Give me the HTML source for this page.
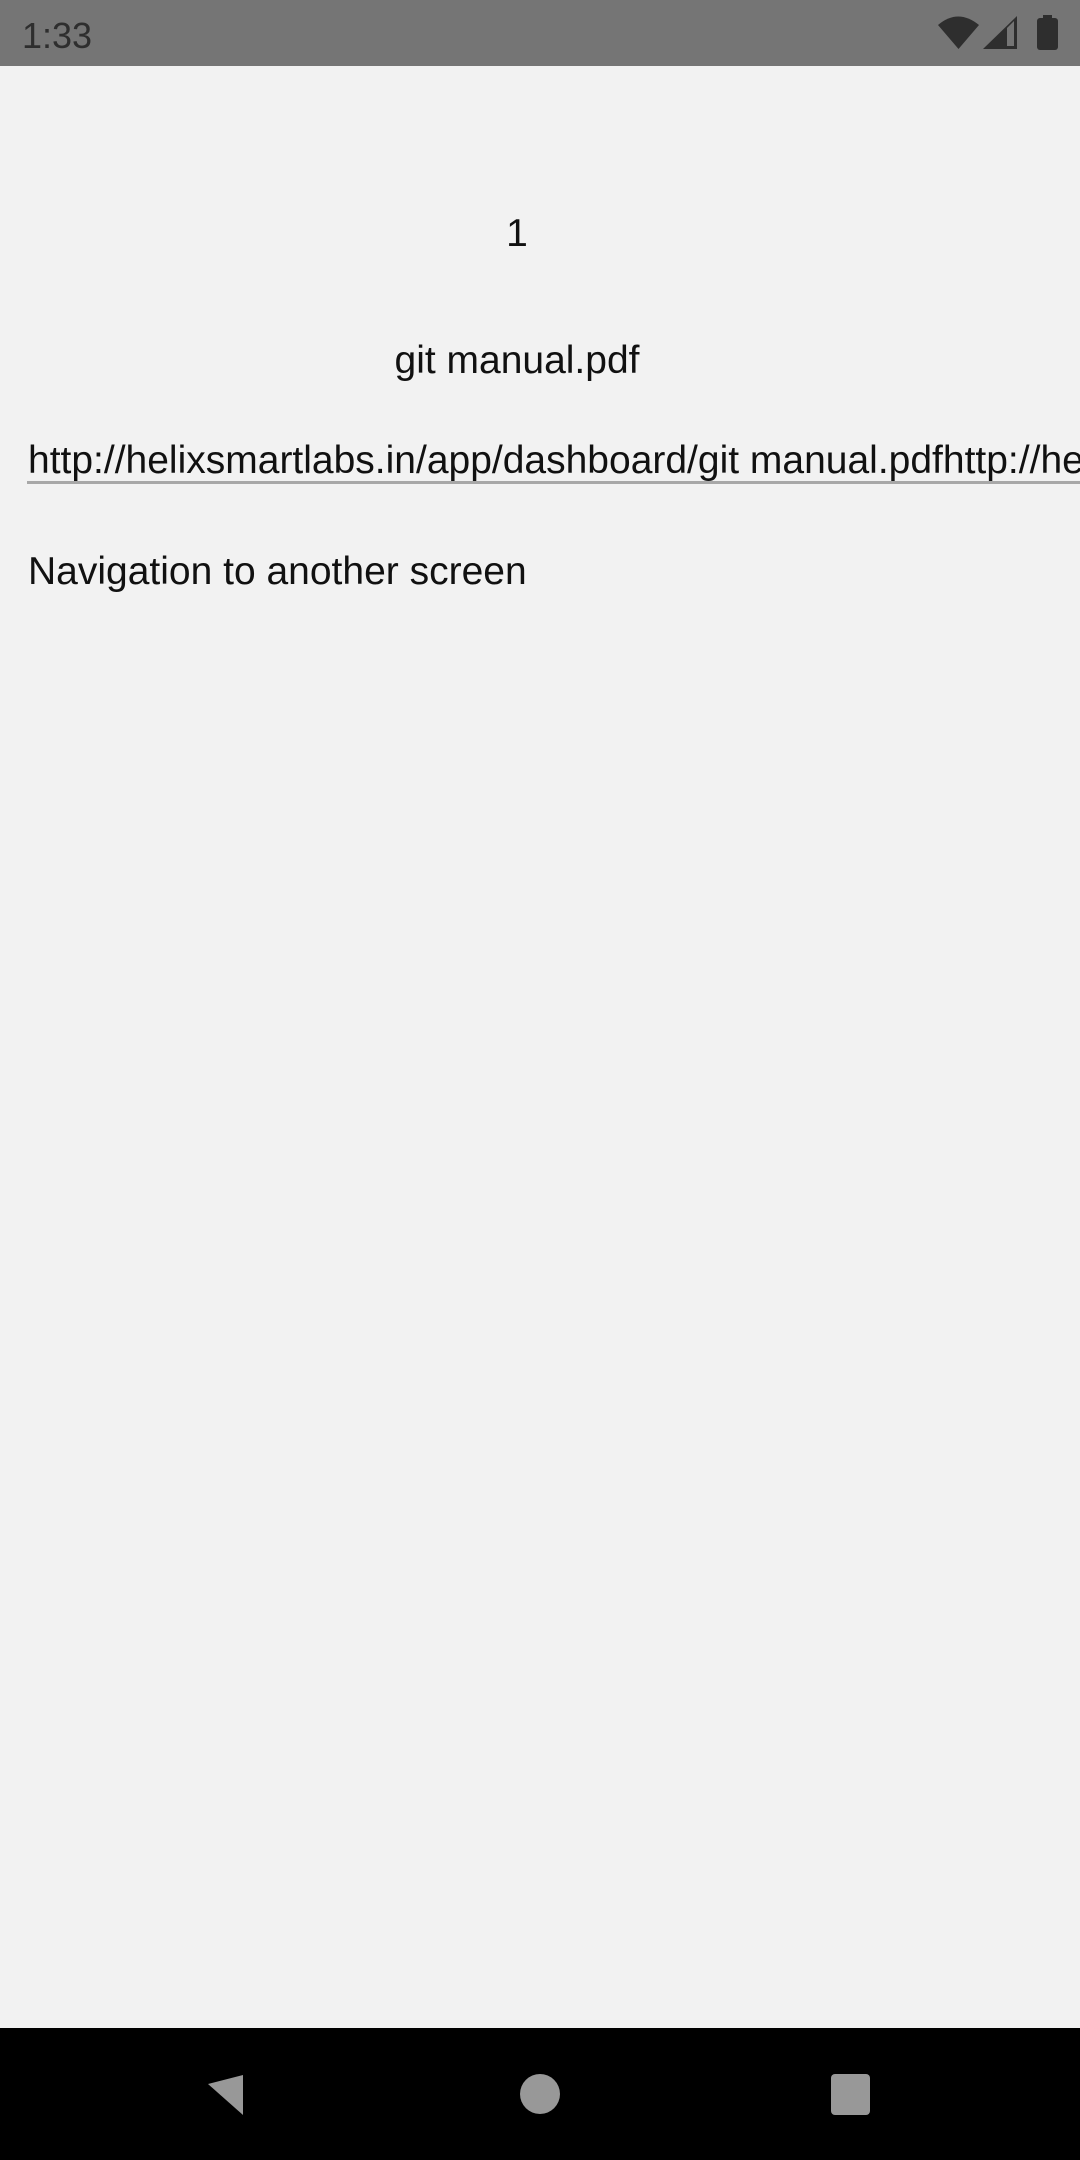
<!DOCTYPE html>
<html><head><meta charset="utf-8"><style>
html,body{margin:0;padding:0}
body{width:1080px;height:2160px;background:#f2f2f2;position:relative;overflow:hidden;font-family:"Liberation Sans",sans-serif;color:#111}
.t{position:absolute;font-size:39px;line-height:39.5px;white-space:nowrap}
</style></head><body>
<div style="position:absolute;left:0;top:0;width:1080px;height:66px;background:#757575"></div>
<div class="t" style="left:22px;top:16px;font-size:36px;color:#2e2e2e">1:33</div>
<svg style="position:absolute;left:0;top:0" width="1080" height="66">
<path d="M938 25 Q958 8 979 25 L958.5 49 Z" fill="#2e2e2e"/>
<path d="M983 49 L1017 16 L1017 49 Z" fill="#2e2e2e"/>
<path d="M1007 28 L1014 21 L1014 46 L1007 46 Z" fill="#757575"/>
<rect x="1043" y="15" width="9" height="4" fill="#2e2e2e"/>
<rect x="1037" y="18" width="21" height="32" rx="3" fill="#2e2e2e"/>
</svg>
<div class="t" style="left:0;width:1034px;text-align:center;top:214px">1</div>
<div class="t" style="left:0;width:1034px;text-align:center;top:341px">git manual.pdf</div>
<div style="position:absolute;left:0;top:420px;width:1080px;height:70px;overflow:hidden">
<div class="t" style="left:28px;top:21px">http://helixsmartlabs.in/app/dashboard/git manual.pdfhttp://helixsmartlabs.in</div>
<div style="position:absolute;left:27px;top:61px;width:1053px;height:3px;background:#a8a8a8"></div>
</div>
<div class="t" style="left:28px;top:552px">Navigation to another screen</div>
<div style="position:absolute;left:0;top:2028px;width:1080px;height:132px;background:#000"></div>
<svg style="position:absolute;left:0;top:2028px" width="1080" height="132">
<path d="M243 47 L243 87 L208 56 Z" fill="#989898"/>
<circle cx="540" cy="66" r="20" fill="#989898"/>
<rect x="831" y="46" width="39" height="41" rx="4" fill="#989898"/>
</svg>
</body></html>
